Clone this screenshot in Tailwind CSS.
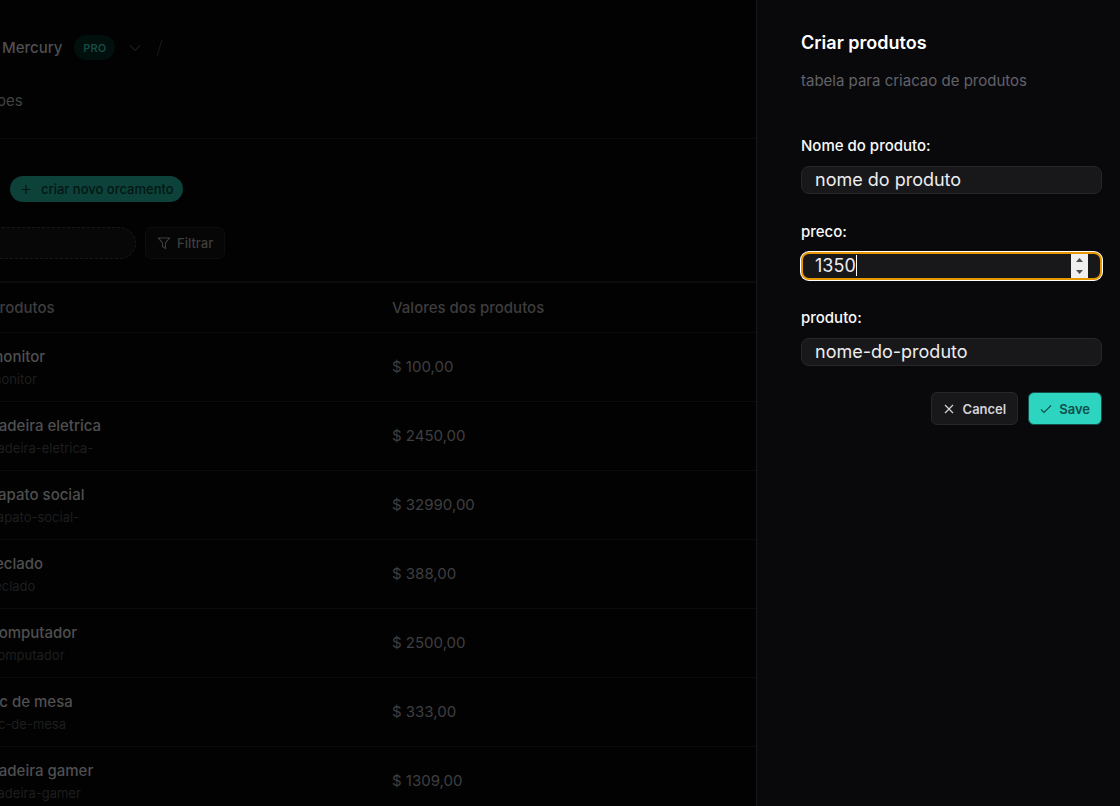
<!DOCTYPE html>
<html lang="pt-BR">
<head>
<meta charset="utf-8">
<meta name="viewport" content="width=device-width, initial-scale=1">
<title>Criar produtos</title>
<script src="https://cdn.jsdelivr.net/npm/@tailwindcss/browser@4"></script>
</head>
<body class="flex h-screen overflow-hidden bg-[#020202] font-['Inter',sans-serif] text-[15px] leading-6 text-[#3f3f40]">
<main class="min-w-0 flex-1 overflow-hidden">
  <header class="border-b border-[#0b0b0b]">
    <div class="flex h-[71px] items-center pt-6 pl-0.5">
      <a href="#" class="font-medium text-[#4f4f50]">Mercury</a>
      <span class="ml-3 flex h-[25px] items-center rounded-full bg-[#010f0d] px-[9px] text-[11px] font-semibold text-[#174a42]">PRO</span>
      <button type="button" aria-label="Trocar projeto" class="ml-3 text-[#1c1c1c]">
        <svg class="size-4" viewBox="0 0 16 16" fill="none" stroke="currentColor" stroke-width="1.2"><path d="M3 5.500 8 10.500 13 5.500"/></svg>
      </button>
      <svg class="ml-3.5 h-4 w-2 text-[#1c1c1c]" viewBox="0 0 8 16" fill="none" stroke="currentColor"><path d="M0 16 5 0"/></svg>
    </div>
    <nav class="-ml-5 flex h-[67px] items-start pt-[18px]">
      <a href="#" class="text-[#424243]">acoes</a>
    </nav>
  </header>
  <section class="pt-[37px]">
    <button type="button" class="ml-2.5 flex h-[26px] items-center gap-2 rounded-full bg-[#0d423a] px-[9px] text-[13px] leading-5 font-medium text-[#031613]">
      <svg class="size-3.5" viewBox="0 0 14 14" fill="none" stroke="currentColor" stroke-width="1.200"><path d="M7 3v9M2.500 7.500h9"/></svg>
      criar novo orcamento
    </button>
    <div class="mt-[25px] -ml-6 flex gap-[9px]">
      <input type="search" aria-label="Buscar" class="h-8 w-40 rounded-full border border-dashed border-[#181818] bg-[#070707] px-4">
      <button type="button" class="flex h-8 items-center gap-1.5 rounded-md border border-[#0d0d0d] bg-[#060606] px-[11px] text-[13px] leading-5 font-medium text-[#3f3f40]">
        <svg class="size-3.5" viewBox="0 0 14 14" fill="none" stroke="currentColor" stroke-width="1.100"><path d="M1.500 2h11L8.500 7v5.500L5.500 10.500V7Z"/></svg>
        Filtrar
      </button>
    </div>
    <table class="mt-[22px] -ml-2.5 w-[calc(100%+10px)] table-fixed border-collapse text-left">
      <thead>
        <tr class="h-[50px] border-t-2 border-b border-[#0b0b0b]">
          <th class="w-[402px] pt-0.5 font-medium text-[#3d3d3e]">Produtos</th>
          <th class="pt-0.5 font-medium text-[#3d3d3e]">Valores dos produtos</th>
        </tr>
      </thead>
      <tbody class="[&>tr]:h-[69px] [&>tr]:border-b [&>tr]:border-[#0b0b0b] [&_a]:block [&_a]:font-medium [&_a]:text-[#4f4f50] [&_small]:block [&_small]:text-[13px] [&_small]:leading-5 [&_small]:text-[#1e1e1f]">
        <tr><td><a href="#">monitor</a><small>monitor</small></td><td>$ 100,00</td></tr>
        <tr><td><a href="#">cadeira eletrica</a><small>cadeira-eletrica-</small></td><td>$ 2450,00</td></tr>
        <tr><td><a href="#">sapato social</a><small>sapato-social-</small></td><td>$ 32990,00</td></tr>
        <tr><td><a href="#">teclado</a><small>teclado</small></td><td>$ 388,00</td></tr>
        <tr><td><a href="#">computador</a><small>computador</small></td><td>$ 2500,00</td></tr>
        <tr><td><a href="#">pc de mesa</a><small>pc-de-mesa</small></td><td>$ 333,00</td></tr>
        <tr><td><a href="#">cadeira gamer</a><small>cadeira-gamer</small></td><td>$ 1309,00</td></tr>
      </tbody>
    </table>
  </section>
</main>
<aside class="w-[364px] shrink-0 border-l border-[#18181b] bg-[#09090b] pt-[29px] pr-[18px] pl-11">
  <h2 class="text-lg leading-7 font-semibold text-white">Criar produtos</h2>
  <p class="mt-3 text-[#62626a]">tabela para criacao de produtos</p>
  <form class="mt-[41px] flex flex-col gap-[26px]">
    <div class="flex flex-col gap-2">
      <label for="nome" class="font-medium text-[#fafafa]">Nome do produto:</label>
      <input id="nome" type="text" placeholder="nome do produto" class="h-7 rounded-lg border border-[#27272a] bg-[#18181b] px-[13px] text-lg text-[#ededef] placeholder:text-[#ededef]">
    </div>
    <div class="flex flex-col gap-2">
      <label for="preco" class="font-medium text-[#fafafa]">preco:</label>
      <div class="relative flex">
        <input id="preco" type="number" value="1350" class="h-7 w-full rounded-lg border-2 border-[#e59700] bg-[#18181b] px-3 text-lg text-[#ededef] ring-1 ring-white outline-none [&::-webkit-inner-spin-button]:appearance-none">
        <span class="absolute top-[3px] left-[55px] h-[21px] w-px bg-white"></span>
        <div class="absolute inset-y-0.5 right-3.5 flex w-[17px] flex-col bg-[#efefef] text-[#4d4d4d]">
          <button type="button" aria-label="Aumentar" class="flex flex-1 items-center justify-center"><svg class="h-1 w-[7px]" viewBox="0 0 7 4" fill="currentColor"><path d="M0 4 3.500 0 7 4Z"/></svg></button>
          <button type="button" aria-label="Diminuir" class="flex flex-1 items-center justify-center"><svg class="h-1 w-[7px]" viewBox="0 0 7 4" fill="currentColor"><path d="M0 0 3.500 4 7 0Z"/></svg></button>
        </div>
      </div>
    </div>
    <div class="flex flex-col gap-2">
      <label for="slug" class="font-medium text-[#fafafa]">produto:</label>
      <input id="slug" type="text" placeholder="nome-do-produto" class="h-7 rounded-lg border border-[#27272a] bg-[#18181b] px-[13px] text-lg text-[#ededef] placeholder:text-[#ededef]">
    </div>
    <div class="flex justify-end gap-2.5 text-[13px] leading-5 font-semibold">
      <button type="button" class="flex h-[33px] items-center gap-2 rounded-md border border-[#27272a] bg-[#18181b] px-[11px] text-[#d4d4d8]">
        <svg class="size-3" viewBox="0 0 12 12" fill="none" stroke="currentColor" stroke-width="1.200"><path d="m2 2 8 8M10 2 2 10"/></svg>
        Cancel
      </button>
      <button type="submit" class="flex h-[33px] items-center gap-[7px] rounded-md border border-[#134e4a] bg-[#2dd4bf] px-[11px] text-[#134e4a]">
        <svg class="size-3" viewBox="0 0 12 12" fill="none" stroke="currentColor" stroke-width="1.200"><path d="M1 6.500 4 9.500 11 2.500"/></svg>
        Save
      </button>
    </div>
  </form>
</aside>
</body>
</html>
